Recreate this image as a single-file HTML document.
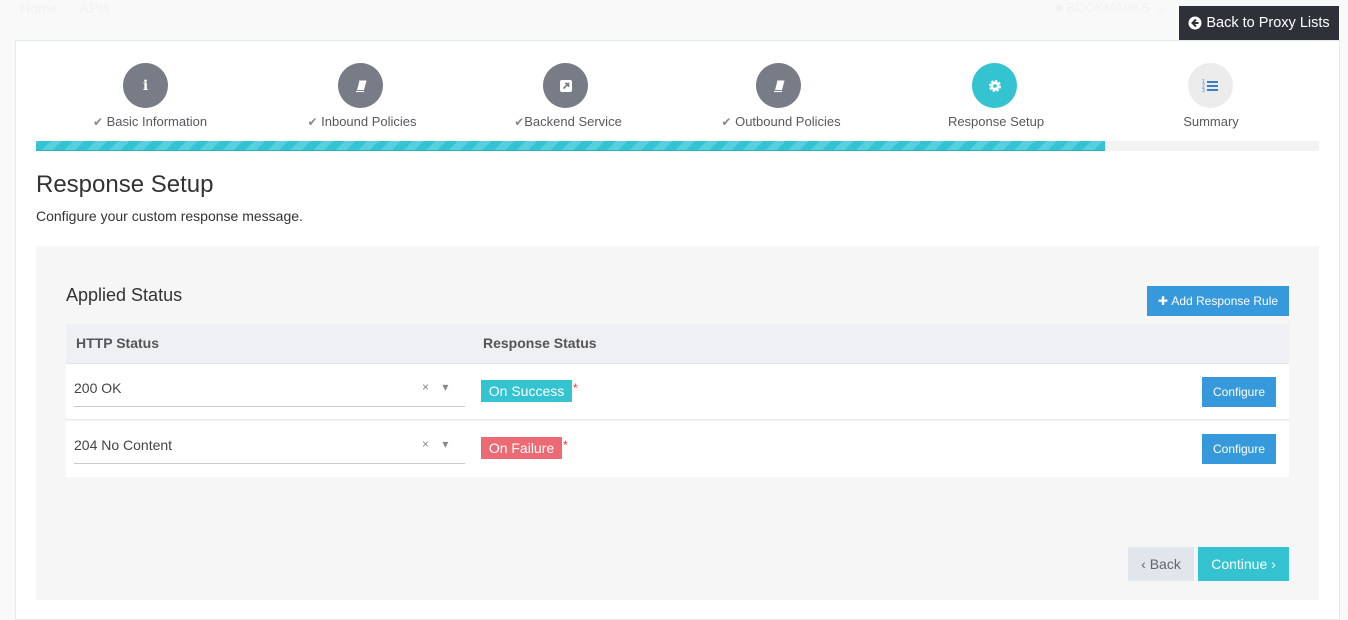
<!DOCTYPE html>
<html><head><meta charset="utf-8"><style>
*{box-sizing:border-box;margin:0;padding:0}
body{width:1348px;height:608px;background:#f9f9f9;font-family:"Liberation Sans",sans-serif;position:relative;overflow:hidden;color:#333}
.abs{position:absolute}
.card{left:15px;top:40px;width:1325px;height:580px;background:#fff;border:1px solid #e6e9ed}
.circ{width:45px;height:45px;border-radius:50%;top:63px;display:flex;align-items:center;justify-content:center}
.lbl{top:114px;font-size:13px;color:#58595b;white-space:nowrap;transform:translateX(-50%)}
.chk{color:#888;font-size:12px}
.btn{color:#fff;display:flex;align-items:center;justify-content:center}
</style></head><body>
<div class="abs" style="left:20px;top:0;font-size:14px;color:#f1f1f1">Home &nbsp;&nbsp;&nbsp;&nbsp; APIs</div>
<div class="abs" style="left:1055px;top:0;font-size:13px;color:#f1f1f1">■ BOOKMARKS ⌄</div>
<div class="abs card"></div>
<div class="abs btn" style="left:1179px;top:6px;width:160px;height:34px;background:#2e3238;font-size:14.5px"><svg width="14" height="14" viewBox="0 0 14 14" style="margin-right:4px"><circle cx="7" cy="7" r="6.5" fill="#fff"/><path d="M8 3.5L4.5 7 8 10.5M4.5 7H10.5" stroke="#2e3238" stroke-width="2" fill="none"/></svg>Back to Proxy Lists</div>

<div class="abs circ" style="left:123px;background:#787c86"><span style="color:#fff;font-weight:bold;font-size:14px;font-family:'DejaVu Serif',serif">i</span></div>
<div class="abs circ" style="left:338px;background:#787c86"><svg width="14" height="14" viewBox="0 0 14 14"><path d="M5 1.5h7.5l-2.5 9.5H2.5z" fill="#fff"/><path d="M2.5 11.5L5 2" stroke="#787c86" stroke-width="0.8"/><path d="M2 12.5h8" stroke="#fff" stroke-width="1.2"/></svg></div>
<div class="abs circ" style="left:543px;background:#787c86"><svg width="14" height="14" viewBox="0 0 14 14"><rect x="1" y="1" width="12" height="12" rx="2" fill="#fff"/><path d="M4.5 9.5L9.5 4.5M6 4.5h3.5V8" stroke="#787c86" stroke-width="1.6" fill="none"/></svg></div>
<div class="abs circ" style="left:756px;background:#787c86"><svg width="14" height="14" viewBox="0 0 14 14"><path d="M5 1.5h7.5l-2.5 9.5H2.5z" fill="#fff"/><path d="M2.5 11.5L5 2" stroke="#787c86" stroke-width="0.8"/><path d="M2 12.5h8" stroke="#fff" stroke-width="1.2"/></svg></div>
<div class="abs circ" style="left:972px;background:#33c3d1"><svg width="14" height="14" viewBox="0 0 14 14"><circle cx="7" cy="7" r="4.5" fill="#fff" stroke="#fff" stroke-width="3" stroke-dasharray="2.2 1.3"/><circle cx="7" cy="7" r="1.8" fill="#33c3d1"/></svg></div>
<div class="abs circ" style="left:1188px;background:#ececec"><svg width="18" height="16" viewBox="0 0 18 16"><g fill="#3a7fc4"><rect x="5" y="3" width="11" height="2"/><rect x="5" y="7" width="11" height="2"/><rect x="5" y="11" width="11" height="2"/></g><text x="0" y="5" font-size="5" fill="#3a7fc4">1</text><text x="0" y="9.5" font-size="5" fill="#3a7fc4">2</text><text x="0" y="14" font-size="5" fill="#3a7fc4">3</text></svg></div>

<div class="abs lbl" style="left:150px"><span class="chk">✔</span> Basic Information</div>
<div class="abs lbl" style="left:362px"><span class="chk">✔</span> Inbound Policies</div>
<div class="abs lbl" style="left:568px"><span class="chk">✔</span>Backend Service</div>
<div class="abs lbl" style="left:781px"><span class="chk">✔</span> Outbound Policies</div>
<div class="abs lbl" style="left:996px">Response Setup</div>
<div class="abs lbl" style="left:1211px">Summary</div>

<div class="abs" style="left:36px;top:141px;width:1283px;height:10px;background:#f3f3f3"></div>
<div class="abs" style="left:36px;top:141px;width:1069px;height:10px;background:repeating-linear-gradient(-45deg,#33c3d1 0 8px,#56d0dc 8px 16px);border-bottom:1px solid #2ab0be"></div>

<div class="abs" style="left:36px;top:171px;font-size:24px;color:#333">Response Setup</div>
<div class="abs" style="left:36px;top:208px;font-size:14px;color:#333">Configure your custom response message.</div>

<div class="abs" style="left:36px;top:246px;width:1283px;height:354px;background:#f6f6f6"></div>
<div class="abs" style="left:66px;top:285px;font-size:18px;color:#333">Applied Status</div>
<div class="abs btn" style="left:1147px;top:286px;width:142px;height:30px;background:#3699dc;font-size:12px">✚&nbsp;Add Response Rule</div>

<div class="abs" style="left:66px;top:324px;width:1223px;height:40px;background:#eff0f4;border-bottom:1px solid #e3e5e9"></div>
<div class="abs" style="left:76px;top:335px;font-size:14px;font-weight:bold;color:#555">HTTP Status</div>
<div class="abs" style="left:483px;top:335px;font-size:14px;font-weight:bold;color:#555">Response Status</div>

<div class="abs" style="left:66px;top:364px;width:1223px;height:56px;background:#fff;border-bottom:1px solid #e8e9ec"></div>
<div class="abs" style="left:66px;top:421px;width:1223px;height:56px;background:#fff"></div>

<div class="abs" style="left:74px;top:380px;font-size:14px;color:#444">200 OK</div>
<div class="abs" style="left:422px;top:380px;font-size:12px;color:#888">×&nbsp;&nbsp;&nbsp;&nbsp;▾</div>
<div class="abs" style="left:74px;top:406px;width:391px;height:1px;background:#ccc"></div>
<div class="abs btn" style="left:481px;top:380px;width:91px;height:22px;background:#33c3d1;font-size:14px">On Success</div>
<div class="abs" style="left:573px;top:381px;font-size:12px;color:#e33">*</div>
<div class="abs btn" style="left:1202px;top:377px;width:74px;height:30px;background:#3699dc;font-size:12px">Configure</div>

<div class="abs" style="left:74px;top:437px;font-size:14px;color:#444">204 No Content</div>
<div class="abs" style="left:422px;top:437px;font-size:12px;color:#888">×&nbsp;&nbsp;&nbsp;&nbsp;▾</div>
<div class="abs" style="left:74px;top:463px;width:391px;height:1px;background:#ccc"></div>
<div class="abs btn" style="left:481px;top:437px;width:81px;height:22px;background:#ec6a73;font-size:14px">On Failure</div>
<div class="abs" style="left:563px;top:438px;font-size:12px;color:#e33">*</div>
<div class="abs btn" style="left:1202px;top:434px;width:74px;height:30px;background:#3699dc;font-size:12px">Configure</div>

<div class="abs btn" style="left:1128px;top:547px;width:66px;height:34px;background:#e1e5ec;color:#666;font-size:14px">‹ Back</div>
<div class="abs btn" style="left:1198px;top:547px;width:91px;height:34px;background:#33c3d1;font-size:14px">Continue ›</div>
</body></html>
